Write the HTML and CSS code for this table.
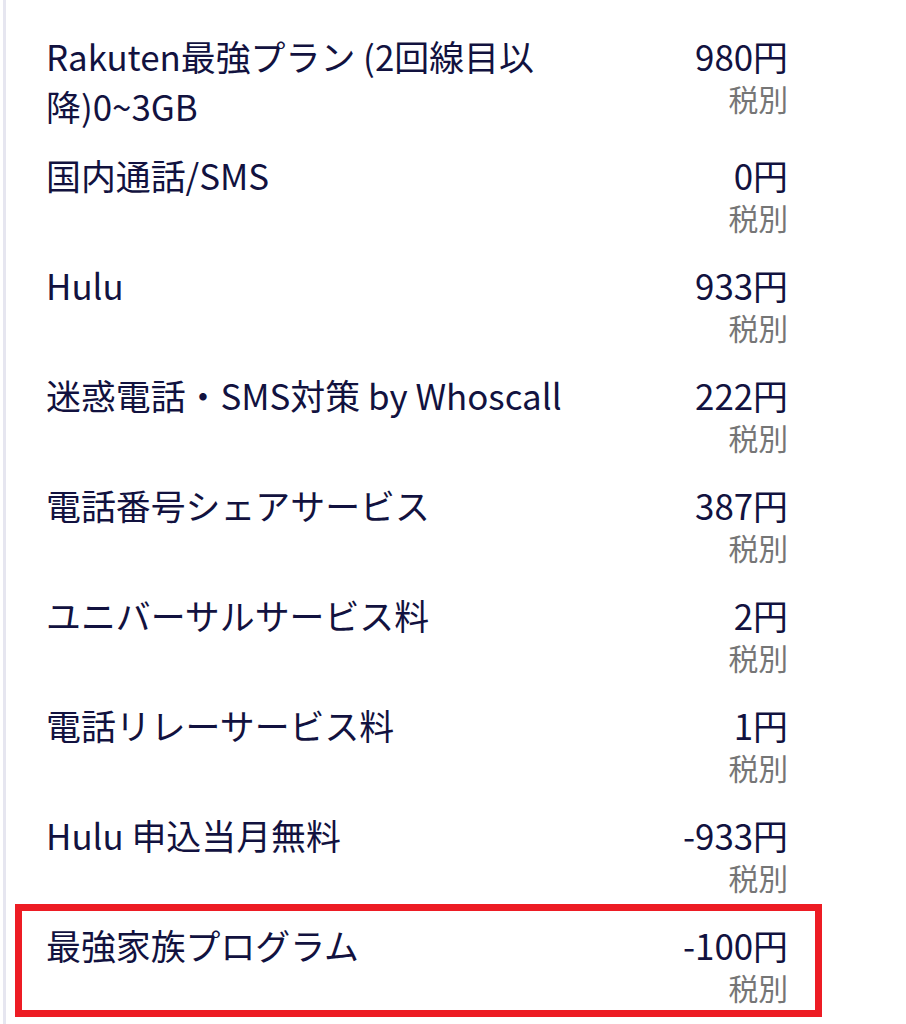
FILE: index.html
```html
<!DOCTYPE html>
<html lang="ja">
 <head>
  <meta charset="UTF-8">
  <title>料金内訳</title>
  <link rel="stylesheet" href="styles.css">
 </head>
 <body>
	<div class="bill">
		<div class="row">
			<div class="name">Rakuten最強プラン (2回線目以降)0~3GB</div>
			<div class="fee"><div class="price">980円</div><div class="tax">税別</div></div>
		</div>
		<div class="row">
			<div class="name">国内通話/SMS</div>
			<div class="fee"><div class="price">0円</div><div class="tax">税別</div></div>
		</div>
		<div class="row">
			<div class="name">Hulu</div>
			<div class="fee"><div class="price">933円</div><div class="tax">税別</div></div>
		</div>
		<div class="row">
			<div class="name">迷惑電話・SMS対策 by Whoscall</div>
			<div class="fee"><div class="price">222円</div><div class="tax">税別</div></div>
		</div>
		<div class="row">
			<div class="name">電話番号シェアサービス</div>
			<div class="fee"><div class="price">387円</div><div class="tax">税別</div></div>
		</div>
		<div class="row">
			<div class="name">ユニバーサルサービス料</div>
			<div class="fee"><div class="price">2円</div><div class="tax">税別</div></div>
		</div>
		<div class="row">
			<div class="name">電話リレーサービス料</div>
			<div class="fee"><div class="price">1円</div><div class="tax">税別</div></div>
		</div>
		<div class="row">
			<div class="name">Hulu 申込当月無料</div>
			<div class="fee"><div class="price">-933円</div><div class="tax">税別</div></div>
		</div>
		<div class="row marked">
			<div class="name">最強家族プログラム</div>
			<div class="fee"><div class="price">-100円</div><div class="tax">税別</div></div>
		</div>
	</div>
 </body>
</html>
```

FILE: styles.css
```css
html,body{
	margin: 0;
	background: #ffffff;
	font-family: "Noto Sans CJK JP", "Noto Sans", sans-serif;
	color: #12123f;
}
.bill{
	margin-left: 3px;
	border-left: solid 3px #e6e6f0;
	padding-top: 22px;
	min-height: 1002px;
}
.row{
	display: flex;
	justify-content: space-between;
	align-items: flex-start;
	padding: 9px 118px 10px 40px;
}
.name{
	width: 524px;
	font-size: 34.9px;
	line-height: 50px;
}
.fee{
	text-align: right;
	padding-bottom: 7px;
}
.price{
	font-size: 34.9px;
	line-height: 50px;
}
.tax{
	font-size: 29.8px;
	line-height: 34px;
	color: #767676;
}
.marked{
	position: relative;
}
.marked:after{
	content: "";
	position: absolute;
	top: -7px;
	bottom: 4px;
	left: 9px;
	right: 84px;
	border: solid 7px #ed1c24;
}
```
